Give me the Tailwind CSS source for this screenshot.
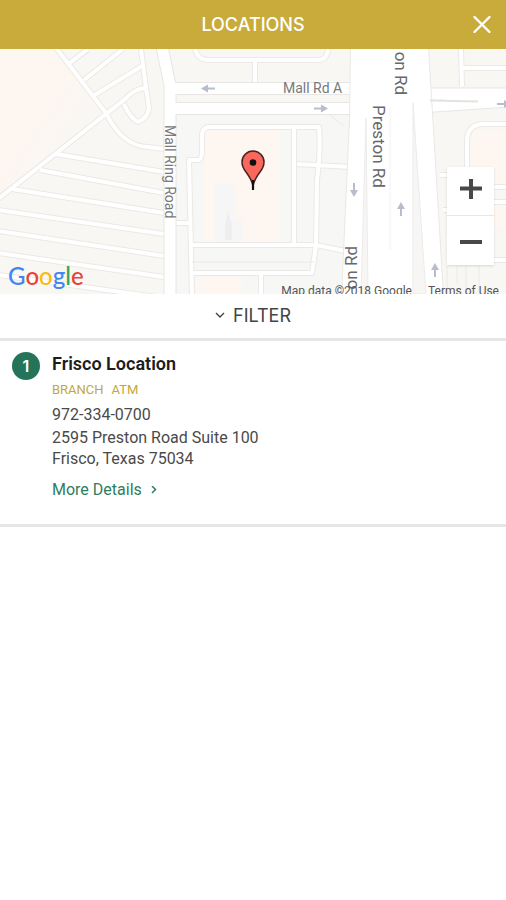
<!DOCTYPE html>
<html lang="en">
<head>
<meta charset="utf-8">
<meta name="viewport" content="width=device-width, initial-scale=1">
<title>Locations</title>
<script src="https://cdn.jsdelivr.net/npm/@tailwindcss/browser@4"></script>
</head>
<body class="min-h-screen bg-white font-['Roboto',sans-serif] text-[#4a4a4a]">
<header class="grid grid-cols-[48px_1fr_48px] items-center bg-[#c8ab3a] py-1 text-white">
  <h1 class="col-start-2 text-center font-['Inter','Lato',sans-serif] text-[18px] leading-[41px] font-medium">LOCATIONS</h1>
  <button type="button" aria-label="Close" class="flex h-10 items-center justify-center">
    <svg class="size-5" viewBox="0 0 20 20" fill="none" stroke="currentColor" stroke-width="2.4" stroke-linecap="round"><path d="M2.500 2l15 15M17.500 2l-15 15"/></svg>
  </button>
</header>

<main>
<section aria-label="Map" class="relative h-[245px] overflow-hidden bg-[#f9f7f4]">
  <svg class="h-full w-full" viewBox="0 49 506 245" preserveAspectRatio="xMidYMid slice" font-family="Roboto, sans-serif">
    <defs>
      <linearGradient id="peach" x1="0" y1="0" x2="1" y2="1"><stop offset=".35" stop-color="#fef6f0"/><stop offset=".65" stop-color="#f9f7f4"/></linearGradient>
      <g id="lanes" fill="none" stroke-linejoin="round">
        <path d="M57 49L106 113Q122 146 148 147L164 149"/>
        <path d="M-2 199L106 114L124 100Q135 88 146 88"/>
        <path d="M141 49L146 88L149 108Q148 118 138 122Q130 118 124 104"/>
        <path d="M67 65L88 49M84 80L123 49M93 96L142 66"/>
        <path d="M56 154L164 172M40 170L164 193M12 189L164 213M-2 210L164 234M-2 231L164 256M-2 253L164 277M-2 275L164 298"/>
        <path d="M195 49Q198 60 208 60H318Q327 60 328 49M255 60V84"/>
        <path d="M192 296L189 160H199Q202 158 202 152V134Q203 127 210 127H319Q321 150 317 180L316 245L312 273H192M294 127V246M192 245H316L350 252M297 164L350 167M175 223H191M261 273V296"/>
        <path d="M461 49L462 86M462 68H508M467 168V140Q468 124 484 124H508M440 175H450M443 210H450M493 187H508M493 202H508M494 260H508"/>
      </g>
      <path id="arrow" d="M-7 0L0 -4V-1H7V1H0V4Z"/>
    </defs>
    <path fill="#f7f7f6" d="M175 113H350V294H175Z"/>
    <path fill="url(#peach)" d="M0 49H57L106 113L0 197Z"/>
    <path fill="#fef7f1" d="M204 130H280V241H204ZM196 278H242V294H196ZM472 130H506V184H472ZM494 204H506V228H494Z"/>
    <path fill="#f6f6f6" d="M215 184H236V218H243V241H215Z"/>
    <path fill="#eeeef1" d="M228 212L232 224V240H225V224Z"/>
    <use href="#lanes" stroke="#ebe9e7" stroke-width="6"/>
    <use href="#lanes" stroke="#fff" stroke-width="4"/>
    <path d="M192 262H314M326 112L344 126M424 294L414 215" fill="none" stroke="#eceae8"/>
    <g fill="none" stroke-linejoin="round">
      <path d="M162 47L170 85V296M170 88.500H360M170 108.500H360M420 94H508M420 107L508 101" stroke="#e8e6e4" stroke-width="13"/>
      <path d="M162 47L170 85V296M170 88.500H360M170 108.500H360M420 94H508M420 107L508 101" stroke="#fff" stroke-width="11"/>
    </g>
    <path d="M351 47L350 120L342 296M428 47L443 296" fill="none" stroke="#e9e8e6" stroke-width="2"/>
    <path d="M351 47H428L443 296H342L350 120Z" fill="#fff"/>
    <path d="M366 118L368 294H361ZM413 103L426 294H413Z" fill="#f8f6f4" stroke="#ecebea"/>
    <path d="M390 108V250" stroke="#f2f2f2"/>
    <path d="M430 100.500L478 101.500" stroke="#e5e3e1" stroke-width="2"/>
    <path d="M447 266V290M457 266V284M466 266V294M479 266V294" stroke="#eceae8"/>
    <g fill="#b9bccd">
      <use href="#arrow" transform="translate(208 88.500)"/>
      <use href="#arrow" transform="translate(321 108.500) rotate(180)"/>
      <use href="#arrow" transform="translate(354 190) rotate(-90)"/>
      <use href="#arrow" transform="translate(401 209) rotate(90)"/>
      <use href="#arrow" transform="translate(435 270) rotate(90)"/>
      <use href="#arrow" transform="translate(504 104) rotate(180)"/>
    </g>
    <g fill="#77787b">
      <text x="283" y="93" font-size="14">Mall Rd A</text>
      <text transform="translate(165 125) rotate(90)" font-size="14">Mall Ring Road</text>
      <g font-size="17" fill="#66686c">
        <text transform="translate(373 105) rotate(90)">Preston Rd</text>
        <text transform="translate(395 95) rotate(90)" text-anchor="end">on Rd</text>
        <text transform="translate(357 246) rotate(-90)" text-anchor="end">on Rd</text>
      </g>
    </g>
    <path d="M253 186Q252 180 246 172Q242 167 242 162A11 11 0 0 1 264 162Q264 167 260 172Q254 180 253 186Z" fill="#f9675d" stroke="#49221e" stroke-width="1.500"/>
    <path d="M253 180V190" stroke="#111" stroke-width="2.200"/>
    <circle cx="253" cy="162.500" r="3.300" fill="#111"/>
  </svg>
  <p class="absolute bottom-1 left-2 font-['Lato',sans-serif] text-[24px] leading-7 font-medium" aria-label="Google"><span class="text-[#4285f4]">G</span><span class="text-[#ea4335]">o</span><span class="text-[#fbbc05]">o</span><span class="text-[#4285f4]">g</span><span class="text-[#34a853]">l</span><span class="text-[#ea4335]">e</span></p>
  <div class="absolute right-[7px] -bottom-1 flex gap-4 text-[12px] leading-[14px] text-[#555]">
    <span>Map data ©2018 Google</span>
    <a href="#terms">Terms of Use</a>
  </div>
  <div class="absolute right-3 bottom-[29px] w-[47px] divide-y divide-[#e6e6e6] bg-white shadow">
    <button type="button" aria-label="Zoom in" class="flex h-[49px] w-full items-center justify-center">
      <svg class="size-6" viewBox="0 0 24 24" fill="none" stroke="#484848" stroke-width="4"><path d="M1 9.500H23M12 0V20"/></svg>
    </button>
    <button type="button" aria-label="Zoom out" class="flex h-[49px] w-full items-center justify-center">
      <svg class="size-6" viewBox="0 0 24 24" fill="none" stroke="#484848" stroke-width="4"><path d="M1 13H23"/></svg>
    </button>
  </div>
</section>

<button type="button" class="flex w-full items-center justify-center gap-2 border-b-3 border-[#e6e6e6] font-['Inter','Lato',sans-serif] text-[18px] leading-[44px] text-[#444]">
  <svg class="size-[10px]" viewBox="0 0 10 10" fill="none" stroke="currentColor" stroke-width="1.400"><path d="M1 2l4 4 4-4"/></svg>
  FILTER
</button>

<ul>
  <li class="flex gap-3 border-b-3 border-[#e6e6e6] px-3 pt-[11px] pb-6">
    <span class="flex size-7 items-center justify-center rounded-full bg-[#24745a] font-['Inter',sans-serif] text-[16px] leading-4 font-semibold text-white">1</span>
    <div class="text-[16px] leading-[21px]">
      <h2 class="text-[18px] leading-6 font-semibold text-[#1c1c1c]">Frisco Location</h2>
      <p class="mt-1 flex gap-2 text-[13px] leading-5 text-[#c2a83c]"><span>BRANCH</span><span>ATM</span></p>
      <p class="mt-1">972-334-0700</p>
      <address class="mt-[2px] not-italic">2595 Preston Road Suite 100<br>Frisco, Texas 75034</address>
      <a href="#details" class="mt-[10px] inline-flex items-center gap-2 text-[#2f7d60]">More Details
        <svg class="size-2" viewBox="0 0 8 8" fill="none" stroke="currentColor" stroke-width="1.500"><path d="M2 0l3.500 3.500L2 7"/></svg>
      </a>
    </div>
  </li>
</ul>
</main>
</body>
</html>
